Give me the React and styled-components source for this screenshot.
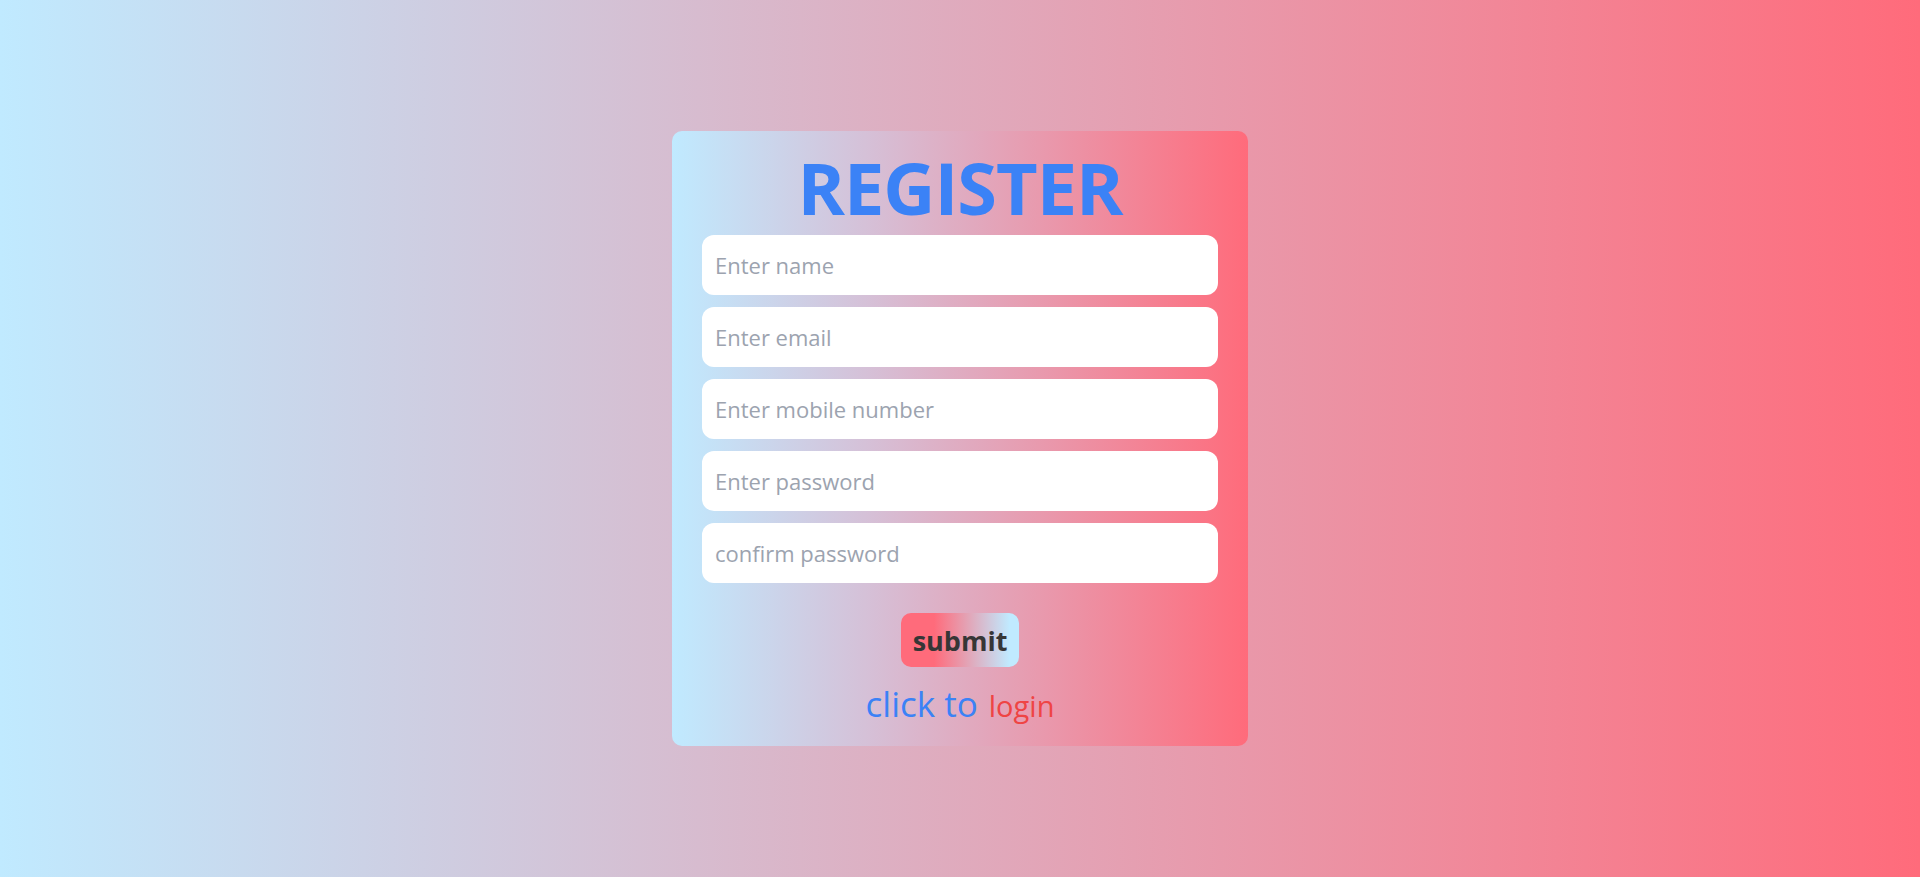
import React from "react";
import styled, { createGlobalStyle } from "styled-components";

const GlobalStyle = createGlobalStyle`
  * { box-sizing: border-box; }
  html, body { margin: 0; padding: 0; }
  body {
    font-family: "Open Sans", "Noto Sans", sans-serif;
  }
`;

const Page = styled.div`
  min-height: 100vh;
  width: 100%;
  display: flex;
  align-items: center;
  justify-content: center;
  background: linear-gradient(to right, #c0eaff, #ff6b7b);
`;

const Card = styled.form`
  width: 576px;
  padding: 20px 30px 20px;
  border-radius: 10px;
  background: linear-gradient(to right, #c0eaff 0%, #d6bfd6 35%, #ff6b7b 100%);
  display: flex;
  flex-direction: column;
  align-items: center;
`;

const Title = styled.h1`
  margin: 0 0 12px;
  font-size: 72px;
  line-height: 72px;
  font-weight: 700;
  color: #3b82f6;
  letter-spacing: -1px;
`;

const Fields = styled.div`
  width: 100%;
  display: flex;
  flex-direction: column;
  gap: 12px;
`;

const Field = styled.input`
  width: 100%;
  height: 60px;
  padding: 0 13px;
  border: none;
  outline: none;
  border-radius: 12px;
  background: #ffffff;
  font-family: "Open Sans", "Noto Sans", sans-serif;
  font-size: 22px;
  color: #111827;
  &::placeholder {
    color: #9ca3af;
  }
`;

const Submit = styled.button`
  margin-top: 30px;
  height: 54px;
  padding: 0 12px;
  border: none;
  border-radius: 10px;
  background: linear-gradient(90deg, #ff6b7b 28%, #c0eaff 92%);
  font-family: "Open Sans", "Noto Sans", sans-serif;
  font-size: 27px;
  font-weight: 700;
  color: #363636;
  cursor: pointer;
`;

const Footer = styled.p`
  margin: 17px 0 0;
  font-size: 35px;
  line-height: 40px;
  color: #3b82f6;
`;

const LoginLink = styled.a`
  margin-left: 11px;
  font-size: 29px;
  color: #ef4444;
  text-decoration: none;
  cursor: pointer;
`;

const fields = [
  { type: "text", placeholder: "Enter name" },
  { type: "email", placeholder: "Enter email" },
  { type: "tel", placeholder: "Enter mobile number" },
  { type: "password", placeholder: "Enter password" },
  { type: "password", placeholder: "confirm password" },
];

export default function App() {
  return (
    <>
      <GlobalStyle />
      <Page>
        <Card onSubmit={(e) => e.preventDefault()}>
          <Title>REGISTER</Title>
          <Fields>
            {fields.map((f) => (
              <Field key={f.placeholder} type={f.type} placeholder={f.placeholder} />
            ))}
          </Fields>
          <Submit type="submit">submit</Submit>
          <Footer>
            click to<LoginLink>login</LoginLink>
          </Footer>
        </Card>
      </Page>
    </>
  );
}
